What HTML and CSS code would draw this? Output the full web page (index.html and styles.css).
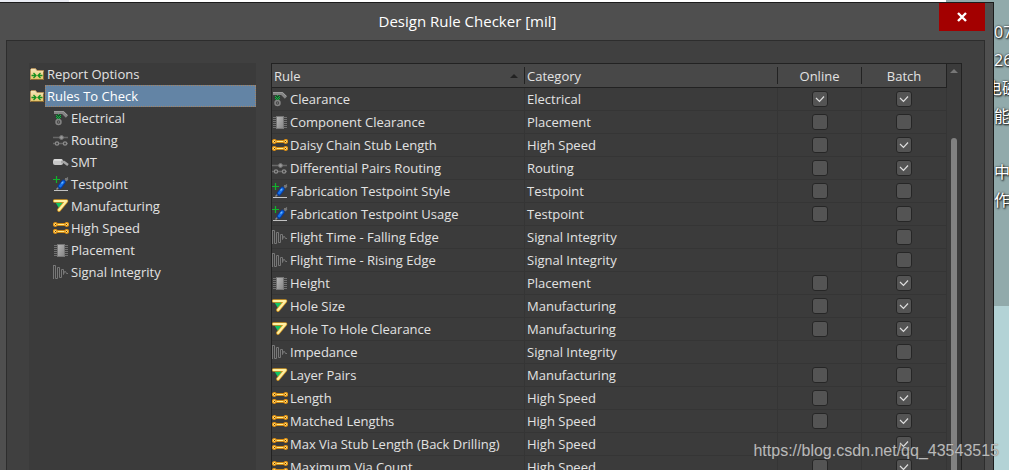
FILE: index.html
```html
<!DOCTYPE html>
<html lang="en">
<head>
<meta charset="utf-8">
<title>Design Rule Checker [mil]</title>
<link rel="stylesheet" href="styles.css">
</head>
<body>
<svg class="sprites" aria-hidden="true">
  <defs>
    <linearGradient id="g-folder" x1="0" y1="0" x2="0" y2="1"><stop offset="0" stop-color="#f6e6bd"/><stop offset="1" stop-color="#e6c469"/></linearGradient>
    <linearGradient id="g-chip" x1="0" y1="0" x2="1" y2="1"><stop offset="0" stop-color="#b9b9b9"/><stop offset="1" stop-color="#858585"/></linearGradient>
  </defs>
  <symbol id="i-folder" viewBox="0 0 16 16">
    <path d="M1.500 13.500V3.500L2.500 2.500H6.500L8 4.500H14.500V13.500Z" fill="url(#g-folder)" stroke="#b3905a"/>
    <path d="M2 13.500H14.500V6" fill="none" stroke="#8b6b31"/>
    <path d="M2.500 9.500H7M4.500 7L7 9.500L4.500 12M13.500 9.500H9M11.500 7L9 9.500L11.500 12" fill="none" stroke="#148f20" stroke-width="1.300"/>
  </symbol>
  <symbol id="i-electrical" viewBox="0 0 16 16">
    <path d="M1 2.500H10L14 6.500" fill="none" stroke="#858585" stroke-width="3.200"/>
    <path d="M1 1.500H10.500L14 5" fill="none" stroke="#9b9b9b"/>
    <path d="M5.500 4L8.500 7L5.500 10L2.500 7Z" fill="#164e29"/>
    <path d="M3 5h1v1H3zM7 5h1v1H7zM5 4h1v1H5zM4 6h1v1H4zM6 6h1v1H6zM5 7h1v1H5zM3 7h1v1H3zM7 7h1v1H7zM4 8h1v1H4zM6 8h1v1H6z" fill="#17b644"/>
    <circle cx="5.500" cy="12" r="2.500" fill="#444" stroke="#858585" stroke-width="1.500"/>
    <circle cx="5.500" cy="12" r=".8" fill="#858585"/>
  </symbol>
  <symbol id="i-routing" viewBox="0 0 16 16">
    <path d="M0 5.500H15M0 11.500H15" fill="none" stroke="#686868" stroke-width="1.500"/>
    <circle cx="8.500" cy="5.500" r="1.900" fill="#999" stroke="#777"/>
    <circle cx="4" cy="11.500" r="1.700" fill="#464646" stroke="#8b8b8b" stroke-width="1.200"/>
    <circle cx="12" cy="11.500" r="1.700" fill="#464646" stroke="#8b8b8b" stroke-width="1.200"/>
  </symbol>
  <symbol id="i-smt" viewBox="0 0 16 16">
    <rect x="0" y="5" width="10" height="6" rx="2" fill="#c7c7c7"/>
    <path d="M1 6H9" stroke="#eee"/>
    <path d="M8 8H11L15 11" fill="none" stroke="#a6a6a6" stroke-width="2.500"/>
  </symbol>
  <symbol id="i-testpoint" viewBox="0 0 16 16">
    <path d="M3.500 0V7M0 3.500H7" stroke="#10b52c" stroke-width="1.200"/>
    <path d="M10 6L15 1.500M12 2.500H15M13 5L15 3" stroke="#777" stroke-width="1.200"/>
    <path d="M3.500 13.500L7 10" stroke="#898989" stroke-width="1.500"/>
    <path d="M7 10.500L10.500 6" stroke="#073c9e" stroke-width="4.500" stroke-linecap="round"/>
    <path d="M7.300 10L10.300 6" stroke="#1674ec" stroke-width="2.800" stroke-linecap="round"/>
    <path d="M8.500 7.500L10 6" stroke="#71b4ff" stroke-width="1.200"/>
    <path d="M1 14.500H15" stroke="#c3c3c3"/>
  </symbol>
  <symbol id="i-manufacturing" viewBox="0 0 16 16">
    <path d="M2.500 4.500H12L6.500 11Z" fill="#12c463"/>
    <path d="M1.700 3H13.500L6 12" fill="none" stroke="#d59a25" stroke-width="3.600" stroke-linejoin="round" stroke-linecap="round"/>
    <path d="M1.700 3H13.500L6 12" fill="none" stroke="#fff0a3" stroke-width="2.100" stroke-linejoin="round" stroke-linecap="round"/>
  </symbol>
  <symbol id="i-speed" viewBox="0 0 16 16">
    <path d="M2.500 4.500H13.500M2.500 11.500H13.500" stroke="#d08813" stroke-width="3"/>
    <path d="M3 4.500H13M3 11.500H13" stroke="#ffeb88" stroke-width="1.200"/>
    <g fill="#fff09a" stroke="#e69412" stroke-width="1.300"><circle cx="2.300" cy="4.500" r="1.800"/><circle cx="13.700" cy="4.500" r="1.800"/><circle cx="2.300" cy="11.500" r="1.800"/><circle cx="13.700" cy="11.500" r="1.800"/></g>
    <path d="M2 4h1v1H2zM13 4h1v1h-1zM2 11h1v1H2zM13 11h1v1h-1z" fill="#683900"/>
  </symbol>
  <symbol id="i-placement" viewBox="0 0 16 16">
    <path d="M1 3.500H15M1 5.500H15M1 7.500H15M1 9.500H15M1 11.500H15M1 13.500H15" stroke="#717171"/>
    <rect x="4.500" y="2.500" width="7" height="12" fill="url(#g-chip)" stroke="#777"/>
  </symbol>
  <symbol id="i-signal" viewBox="0 0 16 16">
    <path d="M.5 1V15M1 1.500H2.500V14.500H4.500V3.500H6.500V13.500H8.500V5.500H10.500V10.500L11.500 7.500H12.500L13.500 9.500H15" fill="none" stroke="#777"/>
  </symbol>
</svg>

<div class="desktop">
  <div class="desktop-top" aria-hidden="true"></div>
  <section class="dialog" aria-labelledby="dialog-title">
    <header class="titlebar">
      <h1 class="title" id="dialog-title">Design Rule Checker [mil]</h1>
      <button class="close" type="button" aria-label="Close">
        <svg class="close-icon" viewBox="0 0 10 10"><path d="M1 1L9 9M9 1L1 9" fill="none" stroke="#fff" stroke-width="2.400"/></svg>
      </button>
    </header>
    <div class="content">
      <nav class="tree" aria-label="Rule folders">
        <ul class="tree-list">
          <li><button class="node" type="button"><svg class="icon"><use href="#i-folder"/></svg><span class="node-text">Report Options</span></button></li>
          <li><button class="node selected" type="button"><svg class="icon"><use href="#i-folder"/></svg><span class="node-text">Rules To Check</span></button>
            <ul class="tree-list children">
              <li><button class="node" type="button"><svg class="icon"><use href="#i-electrical"/></svg><span class="node-text">Electrical</span></button></li>
              <li><button class="node" type="button"><svg class="icon"><use href="#i-routing"/></svg><span class="node-text">Routing</span></button></li>
              <li><button class="node" type="button"><svg class="icon"><use href="#i-smt"/></svg><span class="node-text">SMT</span></button></li>
              <li><button class="node" type="button"><svg class="icon"><use href="#i-testpoint"/></svg><span class="node-text">Testpoint</span></button></li>
              <li><button class="node" type="button"><svg class="icon"><use href="#i-manufacturing"/></svg><span class="node-text">Manufacturing</span></button></li>
              <li><button class="node" type="button"><svg class="icon"><use href="#i-speed"/></svg><span class="node-text">High Speed</span></button></li>
              <li><button class="node" type="button"><svg class="icon"><use href="#i-placement"/></svg><span class="node-text">Placement</span></button></li>
              <li><button class="node" type="button"><svg class="icon"><use href="#i-signal"/></svg><span class="node-text">Signal Integrity</span></button></li>
            </ul>
          </li>
        </ul>
      </nav>
      <div class="grid">
        <table class="rules">
          <colgroup><col><col><col class="col-online"><col class="col-batch"></colgroup>
          <thead>
            <tr>
              <th scope="col" aria-sort="ascending"><div class="head"><span>Rule</span><svg class="sort" viewBox="0 0 8 4"><path d="M0 4L4 0L8 4Z" fill="#222"/></svg></div></th>
              <th scope="col"><div class="head">Category</div></th>
              <th scope="col"><div class="head centered">Online</div></th>
              <th scope="col"><div class="head centered">Batch</div></th>
            </tr>
          </thead>
          <tbody>
            <tr><td><div class="rule"><svg class="icon"><use href="#i-electrical"/></svg>Clearance</div></td><td>Electrical</td><td class="tick"><input type="checkbox" aria-label="Clearance, online" checked></td><td class="tick"><input type="checkbox" aria-label="Clearance, batch" checked></td></tr>
            <tr><td><div class="rule"><svg class="icon"><use href="#i-placement"/></svg>Component Clearance</div></td><td>Placement</td><td class="tick"><input type="checkbox" aria-label="Component Clearance, online"></td><td class="tick"><input type="checkbox" aria-label="Component Clearance, batch"></td></tr>
            <tr><td><div class="rule"><svg class="icon"><use href="#i-speed"/></svg>Daisy Chain Stub Length</div></td><td>High Speed</td><td class="tick"><input type="checkbox" aria-label="Daisy Chain Stub Length, online"></td><td class="tick"><input type="checkbox" aria-label="Daisy Chain Stub Length, batch" checked></td></tr>
            <tr><td><div class="rule"><svg class="icon"><use href="#i-routing"/></svg>Differential Pairs Routing</div></td><td>Routing</td><td class="tick"><input type="checkbox" aria-label="Differential Pairs Routing, online"></td><td class="tick"><input type="checkbox" aria-label="Differential Pairs Routing, batch" checked></td></tr>
            <tr><td><div class="rule"><svg class="icon"><use href="#i-testpoint"/></svg>Fabrication Testpoint Style</div></td><td>Testpoint</td><td class="tick"><input type="checkbox" aria-label="Fabrication Testpoint Style, online"></td><td class="tick"><input type="checkbox" aria-label="Fabrication Testpoint Style, batch"></td></tr>
            <tr><td><div class="rule"><svg class="icon"><use href="#i-testpoint"/></svg>Fabrication Testpoint Usage</div></td><td>Testpoint</td><td class="tick"><input type="checkbox" aria-label="Fabrication Testpoint Usage, online"></td><td class="tick"><input type="checkbox" aria-label="Fabrication Testpoint Usage, batch"></td></tr>
            <tr><td><div class="rule"><svg class="icon"><use href="#i-signal"/></svg>Flight Time - Falling Edge</div></td><td>Signal Integrity</td><td class="tick"></td><td class="tick"><input type="checkbox" aria-label="Flight Time - Falling Edge, batch"></td></tr>
            <tr><td><div class="rule"><svg class="icon"><use href="#i-signal"/></svg>Flight Time - Rising Edge</div></td><td>Signal Integrity</td><td class="tick"></td><td class="tick"><input type="checkbox" aria-label="Flight Time - Rising Edge, batch"></td></tr>
            <tr><td><div class="rule"><svg class="icon"><use href="#i-placement"/></svg>Height</div></td><td>Placement</td><td class="tick"><input type="checkbox" aria-label="Height, online"></td><td class="tick"><input type="checkbox" aria-label="Height, batch" checked></td></tr>
            <tr><td><div class="rule"><svg class="icon"><use href="#i-manufacturing"/></svg>Hole Size</div></td><td>Manufacturing</td><td class="tick"><input type="checkbox" aria-label="Hole Size, online"></td><td class="tick"><input type="checkbox" aria-label="Hole Size, batch" checked></td></tr>
            <tr><td><div class="rule"><svg class="icon"><use href="#i-manufacturing"/></svg>Hole To Hole Clearance</div></td><td>Manufacturing</td><td class="tick"><input type="checkbox" aria-label="Hole To Hole Clearance, online"></td><td class="tick"><input type="checkbox" aria-label="Hole To Hole Clearance, batch" checked></td></tr>
            <tr><td><div class="rule"><svg class="icon"><use href="#i-signal"/></svg>Impedance</div></td><td>Signal Integrity</td><td class="tick"></td><td class="tick"><input type="checkbox" aria-label="Impedance, batch"></td></tr>
            <tr><td><div class="rule"><svg class="icon"><use href="#i-manufacturing"/></svg>Layer Pairs</div></td><td>Manufacturing</td><td class="tick"><input type="checkbox" aria-label="Layer Pairs, online"></td><td class="tick"><input type="checkbox" aria-label="Layer Pairs, batch"></td></tr>
            <tr><td><div class="rule"><svg class="icon"><use href="#i-speed"/></svg>Length</div></td><td>High Speed</td><td class="tick"><input type="checkbox" aria-label="Length, online"></td><td class="tick"><input type="checkbox" aria-label="Length, batch" checked></td></tr>
            <tr><td><div class="rule"><svg class="icon"><use href="#i-speed"/></svg>Matched Lengths</div></td><td>High Speed</td><td class="tick"><input type="checkbox" aria-label="Matched Lengths, online"></td><td class="tick"><input type="checkbox" aria-label="Matched Lengths, batch" checked></td></tr>
            <tr><td><div class="rule"><svg class="icon"><use href="#i-speed"/></svg>Max Via Stub Length (Back Drilling)</div></td><td>High Speed</td><td class="tick"></td><td class="tick"><input type="checkbox" aria-label="Max Via Stub Length, batch" checked></td></tr>
            <tr><td><div class="rule"><svg class="icon"><use href="#i-speed"/></svg>Maximum Via Count</div></td><td>High Speed</td><td class="tick"><input type="checkbox" aria-label="Maximum Via Count, online"></td><td class="tick"><input type="checkbox" aria-label="Maximum Via Count, batch" checked></td></tr>
          </tbody>
        </table>
        <div class="scrollbar" aria-hidden="true">
          <svg class="arrow" viewBox="0 0 8 4"><path d="M0 4L4 0L8 4Z" fill="#777"/></svg>
          <div class="thumb"></div>
        </div>
      </div>
    </div>
  </section>
  <aside class="behind" lang="zh">
    <p>07</p><p>26</p><p class="cut">电磁</p><p>能</p><p class="blank"></p><p>中文</p><p>作</p>
  </aside>
  <p class="watermark">https://blog.csdn.net/qq_43543515</p>
</div>
</body>
</html>
```
FILE: styles.css
```css
* { box-sizing: border-box; }
html, body { height: 100%; }
body {
  margin: 0;
  overflow: hidden;
  background: #b3d3d6;
  color: #e2e2e2;
  font: 13px/22px "Open Sans", "Noto Sans", sans-serif;
}
p, h1, ul { margin: 0; padding: 0; }
button { border: 0; padding: 0; background: none; color: inherit; font: inherit; }
.sprites { position: absolute; width: 0; height: 0; }

.desktop {
  position: relative;
  height: 100%;
  overflow: hidden;
  display: grid;
  grid-template: 2px minmax(0, 1fr) / minmax(0, 1fr) 15px;
  background: linear-gradient(#91aaab 306px, #b3d3d6 306px);
}
.desktop-top { background: linear-gradient(90deg, #e9ebf2 69px, #fff 69px); margin-right: 48px; }

.dialog {
  grid-area: 2 / 1;
  display: flex;
  flex-direction: column;
  min-height: 0;
  padding: 0 8px 0 6px;
  background: #4f4f4f;
  border: solid #1c1c1c;
  border-width: 1px 1px 0 0;
}
.titlebar {
  display: grid;
  grid-template-columns: 46px 1fr 46px;
  flex: none;
  height: 37px;
}
.title {
  grid-column: 2;
  padding: 7px 56px 0 0;
  color: #fff;
  font-size: 15px;
  font-weight: 400;
  text-align: center;
}
.close { display: grid; place-items: center; height: 28px; background: #a30000; }
.close-icon { width: 10px; height: 10px; }

.content {
  flex: 1;
  min-height: 0;
  display: grid;
  grid-template-columns: 227fr 691fr;
  gap: 15px;
  padding: 22px 22px 0;
  background: #404040;
  border: 1px solid #2d2d2d;
  border-bottom: 0;
}
.tree { background: #3b3b3b; }
.tree-list { list-style: none; }
.children { padding-left: 24px; }
.node { display: flex; align-items: center; width: 100%; height: 22px; text-align: left; }
.node-text { flex: 1; padding-left: 1px; border: 1px solid transparent; line-height: 20px; }
.selected .node-text { color: #fff; background: #6384a5; border: 1px dotted #a58463; }
.icon { flex: none; width: 16px; height: 16px; }

.grid {
  min-height: 0;
  display: flex;
  overflow: hidden;
  align-items: flex-start;
  background: #3b3b3b;
  border: 1px solid #222;
  border-bottom: 0;
}
.rules { flex: 1; table-layout: fixed; border-collapse: separate; border-spacing: 0; width: 100%; }
.col-online { width: 84px; }
.col-batch { width: 85px; }
th {
  height: 24px;
  padding: 3px 0;
  background: #484848;
  border-bottom: 1px solid #222;
  font-weight: 400;
  text-align: left;
}
th:last-child { border-right: 1px solid #222; }
.head {
  display: flex;
  align-items: center;
  justify-content: space-between;
  height: 17px;
  padding: 0 6px 0 2px;
  border-right: 1px solid #222;
}
th:last-child .head { border-right: 0; }
.head.centered { justify-content: center; padding: 0; }
.sort { width: 8px; height: 4px; }
td {
  height: 23px;
  padding: 0 0 0 2px;
  border: solid #353535;
  border-width: 0 1px 1px 0;
  white-space: nowrap;
}
td:first-child { padding: 0; }
.rule { display: flex; align-items: center; gap: 2px; }
.tick { padding: 0; text-align: center; }
.tick input {
  appearance: none;
  display: block;
  width: 16px;
  height: 16px;
  margin: 0 auto;
  background: #545454 center / 10px 10px no-repeat;
  border: 1px solid #262626;
  border-radius: 3px;
}
.tick input:checked {
  background-image: url("data:image/svg+xml,%3Csvg xmlns='http://www.w3.org/2000/svg' viewBox='0 0 10 10'%3E%3Cpath d='M1 4L4.500 7.500L9 2.500' fill='none' stroke='%23ddd' stroke-width='1.200'/%3E%3C/svg%3E");
}
.scrollbar {
  flex: none;
  align-self: stretch;
  display: flex;
  flex-direction: column;
  align-items: center;
  width: 14px;
  padding-top: 5px;
}
.arrow { flex: none; width: 8px; height: 4px; margin-bottom: 65px; }
.thumb { flex: 1; width: 6px; background: #818181; border-radius: 3px 3px 0 0; }

.behind {
  grid-area: 2 / 2;
  overflow: hidden;
  padding-top: 16px;
  color: #fff;
  font: 16px/28px "Open Sans", "Noto Sans CJK SC", sans-serif;
  text-shadow: 1px 1px 2px #000, 0 0 2px #222;
  white-space: nowrap;
}
.cut { text-indent: -8px; }
.blank { height: 28px; }
.watermark {
  position: absolute;
  right: 10px;
  bottom: 8px;
  color: rgba(225, 225, 225, .75);
  font: 16px/22px "Liberation Sans", Arial, sans-serif;
  text-shadow: 0 0 1px #444;
}
```
